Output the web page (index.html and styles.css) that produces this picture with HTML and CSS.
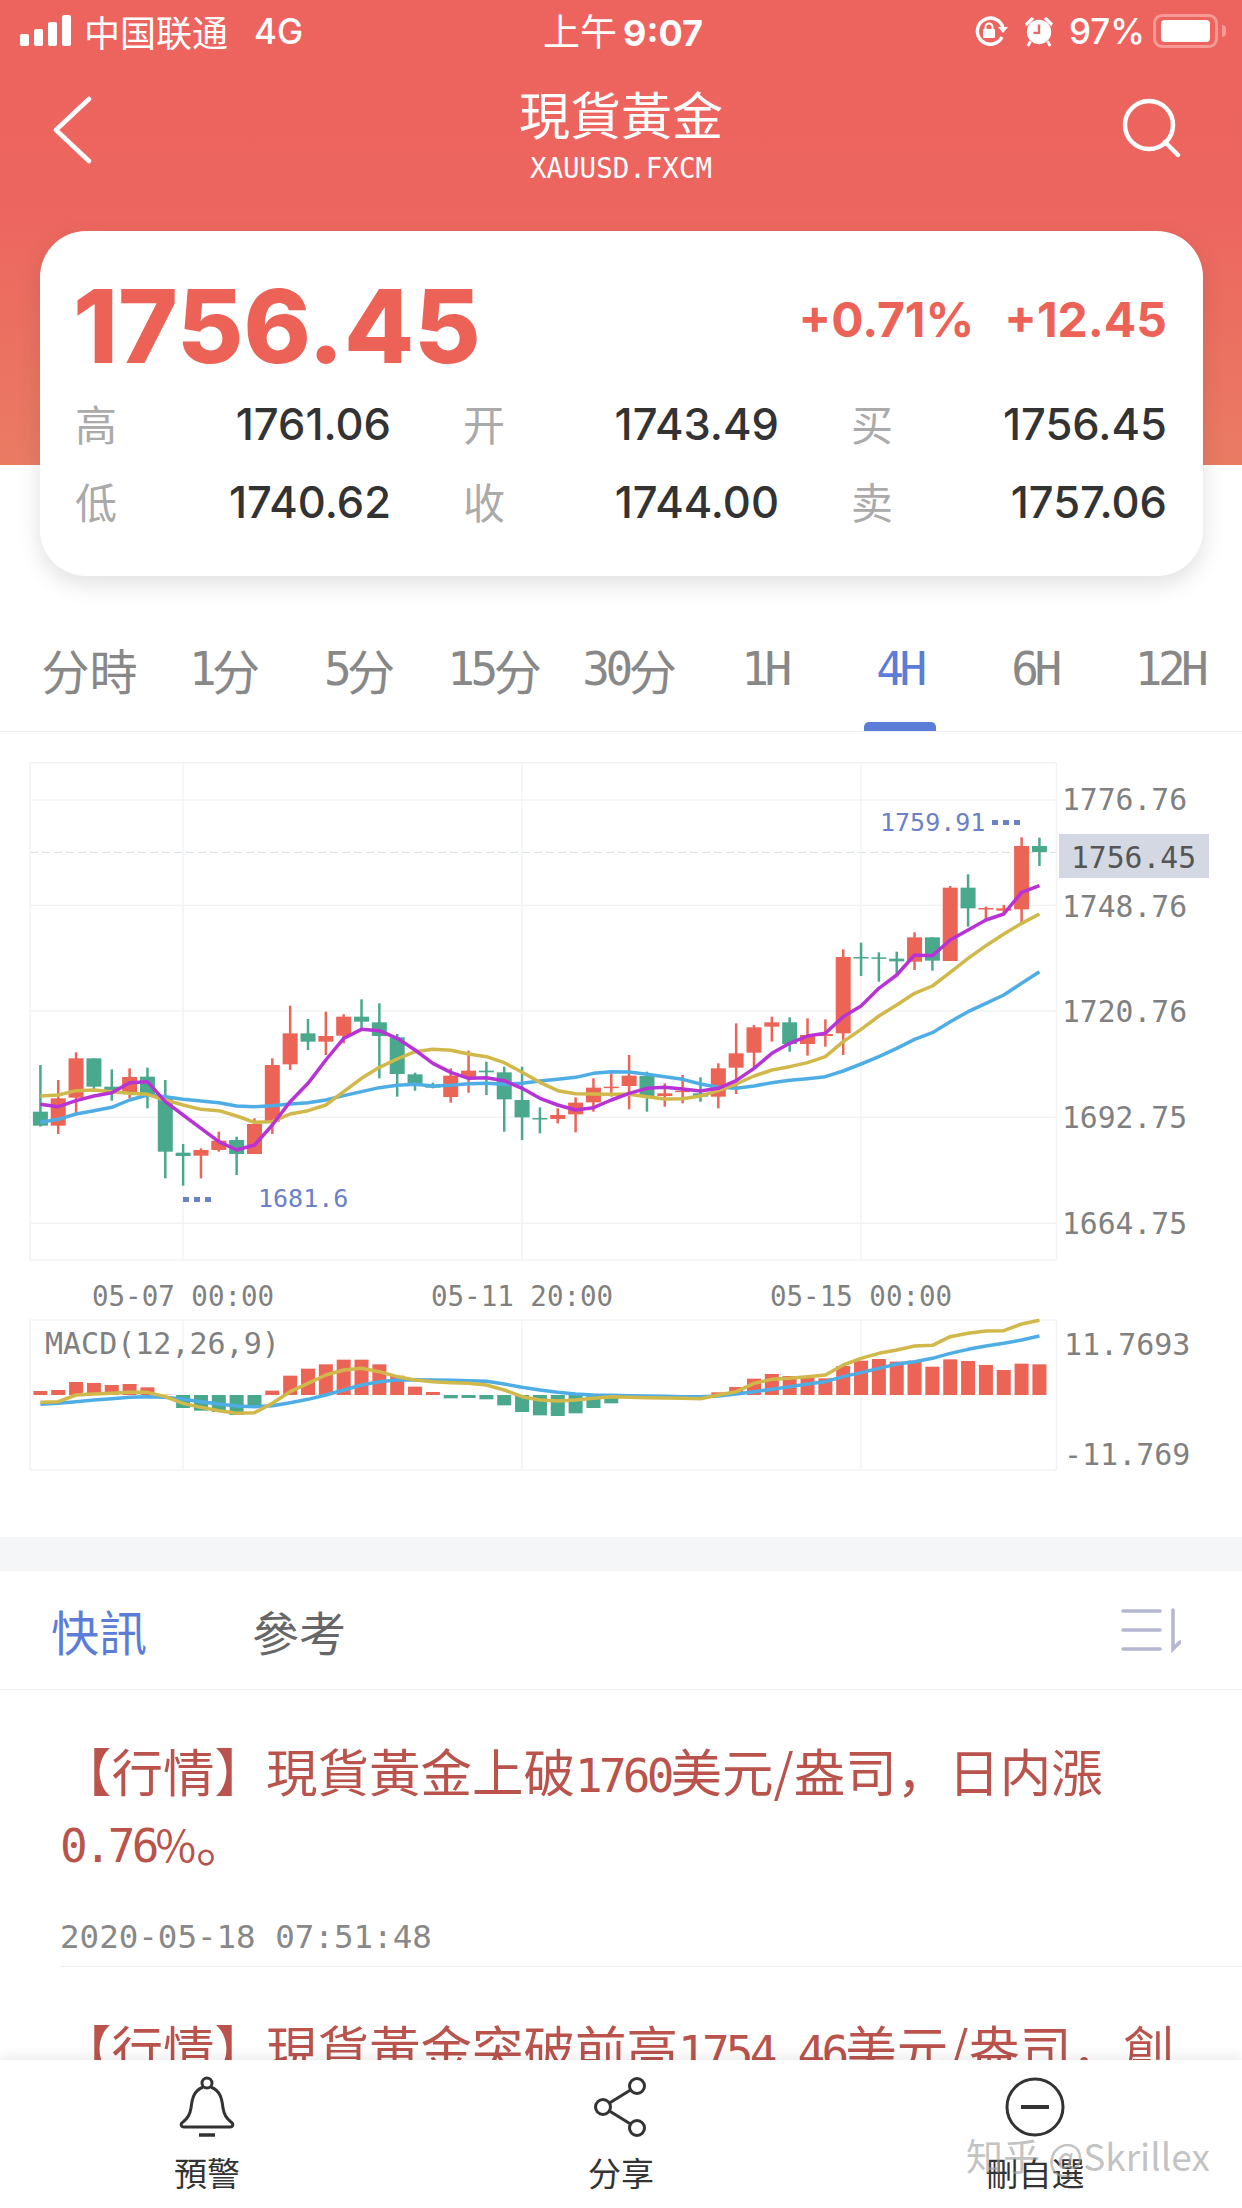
FILE: index.html
```html
<!DOCTYPE html>
<html lang="zh-Hans">
  <head>
    <meta charset="UTF-8" />
    <title>現貨黃金</title>
    <link rel="stylesheet" href="styles.css">
  </head>
  <body>
    <div class="page">
      <header class="header">
        <div class="status">
          <div class="status-left">
            <svg class="signal" width="54" height="32" viewBox="0 0 54 32">
              <rect x="0" y="19" width="9" height="12" rx="2" />
              <rect x="14" y="14" width="9" height="17" rx="2" />
              <rect x="28" y="7" width="9" height="24" rx="2" />
              <rect x="42" y="0" width="9" height="31" rx="2" />
            </svg>
            <span class="carrier">中国联通</span>
            <span class="network">4G</span>
          </div>
          <div class="status-time">上午<b>9:07</b></div>
          <div class="status-right">
            <svg class="rotation" width="34" height="30" viewBox="0 0 34 30" fill="none" stroke="#fff" stroke-width="3.4">
              <path d="M28 21a13 13 0 1 1 1-9" />
              <path d="M24 11h10l-5 6z" fill="#fff" stroke="none" />
              <rect x="9" y="13" width="12" height="9" rx="1" fill="#fff" stroke="none" />
              <path d="M11.5 13v-2a3.500 3.500 0 0 1 7 0v2" stroke-width="2" />
            </svg>
            <svg class="alarm" width="30" height="32" viewBox="0 0 32 34">
              <circle cx="16" cy="18" r="13" fill="#fff" />
              <path d="M1 9l7-7 3 2-8 8zM31 9l-7-7-3 2 8 8z" fill="#fff" />
              <path d="M16 10v9h-6" fill="none" stroke="#ec6560" stroke-width="2.5" />
              <path d="M7 28l-3 5M25 28l3 5" stroke="#fff" stroke-width="3" />
            </svg>
            <span class="battery-text">97%</span>
            <div class="battery"><div class="battery-fill"></div></div>
            <div class="battery-tip"></div>
          </div>
        </div>
        <div class="nav">
          <svg class="nav-back" width="44" height="70" viewBox="0 0 44 70" fill="none" stroke="#fff" stroke-width="4.5" stroke-linecap="round" stroke-linejoin="round">
            <path d="M36 4L3 35l33 31" />
          </svg>
          <div class="nav-title">
            <div class="title">現貨黃金</div>
            <div class="symbol">XAUUSD.FXCM</div>
          </div>
          <svg class="nav-search" width="60" height="60" viewBox="0 0 60 60" fill="none" stroke="#fff" stroke-width="4.5" stroke-linecap="round">
            <circle cx="27" cy="27" r="24" />
            <path d="M43 44l13 13" />
          </svg>
        </div>
      </header>

      <section class="quote">
        <div class="quote-top">
          <div class="price">1756.45</div>
          <div class="change">
            <span>+0.71%</span>
            <span>+12.45</span>
          </div>
        </div>
        <div class="stats">
          <div class="stat"><span class="stat-label">高</span><span class="stat-value">1761.06</span></div>
          <div class="stat"><span class="stat-label">开</span><span class="stat-value">1743.49</span></div>
          <div class="stat"><span class="stat-label">买</span><span class="stat-value">1756.45</span></div>
          <div class="stat"><span class="stat-label">低</span><span class="stat-value">1740.62</span></div>
          <div class="stat"><span class="stat-label">收</span><span class="stat-value">1744.00</span></div>
          <div class="stat"><span class="stat-label">卖</span><span class="stat-value">1757.06</span></div>
        </div>
      </section>

      <nav class="periods">
        <div class="period">分時</div>
        <div class="period"><span class="mono">1</span>分</div>
        <div class="period"><span class="mono">5</span>分</div>
        <div class="period"><span class="mono">15</span>分</div>
        <div class="period"><span class="mono">30</span>分</div>
        <div class="period"><span class="mono">1H</span></div>
        <div class="period period_active"><span class="mono">4H</span></div>
        <div class="period"><span class="mono">6H</span></div>
        <div class="period"><span class="mono">12H</span></div>
      </nav>

      <section class="chart">
        <svg id="chart-svg" class="chart-svg" width="1242" height="805" viewBox="0 0 1242 805"></svg>
      </section>

      <div class="band"></div>

      <div class="news-tabs">
        <div class="news-tab news-tab_active">快訊</div>
        <div class="news-tab">參考</div>
        <svg class="sort" width="60" height="46" viewBox="0 0 60 46" fill="none" stroke="#b5b7d0" stroke-width="3.5" stroke-linecap="round">
          <path d="M2 4h37M2 23h37M2 42h37" />
          <path d="M52 3v39l7-7" />
        </svg>
      </div>

      <article class="news-item">
        <p class="news-text">【行情】現貨黃金上破<span class="mono">1760</span>美元/盎司，日内漲<span class="mono">0.76</span><span class="percent">%</span>。</p>
        <div class="news-time">2020-05-18 07:51:48</div>
      </article>
      <article class="news-item">
        <p class="news-text">【行情】現貨黃金突破前高<span class="mono">1754.46</span>美元/盎司，創</p>
      </article>

      <footer class="toolbar">
        <div class="tool">
          <svg width="56" height="62" viewBox="0 0 56 62" fill="none" stroke="#333" stroke-width="3">
            <circle cx="28" cy="7" r="5" />
            <path d="M24 11C14 15 13 24 12 32c-1 7-4 11-8 14-3 2-2 5 1 5h46c3 0 4-3 1-5-4-3-7-7-8-14-1-8-2-17-12-21" />
            <path d="M20 59h16" stroke-width="3.5" />
          </svg>
          <span class="tool-label">預警</span>
        </div>
        <div class="tool">
          <svg width="56" height="62" viewBox="0 0 56 62" fill="none" stroke="#333" stroke-width="3">
            <circle cx="44" cy="10" r="7.5" />
            <circle cx="10" cy="31" r="7.5" />
            <circle cx="44" cy="52" r="7.5" />
            <path d="M37.5 14L16.5 27M16.5 35l21 13" />
          </svg>
          <span class="tool-label">分享</span>
        </div>
        <div class="tool">
          <svg width="60" height="62" viewBox="0 0 60 62" fill="none" stroke="#333" stroke-width="3">
            <circle cx="30" cy="31" r="28" />
            <path d="M16 31h28" stroke-width="4" />
          </svg>
          <span class="tool-label">刪自選</span>
        </div>
        <div class="watermark">知乎 @Skrillex</div>
      </footer>
    </div>
    <script src="chart.js"></script>
  </body>
</html>
```

FILE: styles.css
```css
* {
  box-sizing: border-box;
}

html,
body {
  margin: 0;
  padding: 0;
  background: #fff;
}

.page {
  position: relative;
  width: 1242px;
  height: 2208px;
  overflow: hidden;
  font-family: "Noto Sans CJK SC", "Noto Sans", sans-serif;
  color: #333;
}

.header {
  height: 465px;
  background: linear-gradient(#ed645f 0, #ed655f 200px, #ea7b63 465px);
  color: #fff;
}

.status {
  display: grid;
  grid-template-columns: 1fr auto 1fr;
  align-items: center;
  height: 60px;
  padding: 2px 16px 0 20px;
}

.status-left {
  display: flex;
  align-items: center;
  gap: 10px;
}

.signal {
  fill: #fff;
}

.carrier {
  font-size: 36px;
  line-height: 40px;
}

.network {
  margin-left: 16px;
  font-family: "Inter", sans-serif;
  font-size: 35px;
  font-weight: 500;
}

.status-time {
  font-size: 37px;
  line-height: 40px;
}

.status-time b {
  margin-left: 6px;
  font-family: "Inter", sans-serif;
  font-size: 36px;
  font-weight: 700;
}

.status-right {
  display: flex;
  align-items: center;
  justify-content: flex-end;
}

.rotation {
  margin-right: 16px;
}

.alarm {
  margin-right: 15px;
}

.battery-text {
  margin-right: 8px;
  font-family: "Inter", sans-serif;
  font-size: 35px;
  font-weight: 500;
}

.battery {
  width: 65px;
  height: 34px;
  padding: 3px 5px;
  border: 3px solid #f79a96;
  border-radius: 9px;
}

.battery-fill {
  height: 100%;
  background: #fff;
  border-radius: 4px;
}

.battery-tip {
  width: 4px;
  height: 12px;
  margin-left: 4px;
  background: #f79a96;
  border-radius: 0 4px 4px 0;
}

.nav {
  display: grid;
  grid-template-columns: 1fr auto 1fr;
  align-items: center;
  height: 146px;
  padding: 0 60px;
}

.nav-back {
  margin: 0 0 6px -7px;
}

.nav-search {
  justify-self: end;
  margin-bottom: 10px;
}

.nav-title {
  text-align: center;
}

.title {
  font-size: 51px;
  line-height: 62px;
}

.symbol {
  margin-top: 8px;
  font-family: "DejaVu Sans Mono", monospace;
  font-size: 27.5px;
  line-height: 32px;
}

.quote {
  position: relative;
  width: 1163px;
  height: 345px;
  margin: -234px 0 0 40px;
  padding: 30px 36px 0;
  background: #fff;
  border-radius: 46px;
  box-shadow: 0 8px 22px rgba(60, 60, 60, 0.16);
}

.quote-top {
  display: flex;
  align-items: center;
  justify-content: space-between;
  height: 124px;
}

.price {
  margin: 6px 0 0 -3px;
  font-family: "Inter", sans-serif;
  font-size: 102px;
  font-weight: 800;
  color: #ec6257;
}

.change {
  display: flex;
  gap: 30px;
  margin-bottom: 8px;
  font-family: "Inter", sans-serif;
  font-size: 48px;
  font-weight: 700;
  color: #ec6257;
}

.stats {
  display: grid;
  grid-template-columns: repeat(3, 315px);
  justify-content: space-between;
}

.stat {
  display: flex;
  align-items: center;
  justify-content: space-between;
  height: 78px;
}

.stat-label {
  margin: 0 0 4px -1px;
  font-size: 42px;
  color: #aaa;
}

.stat-value {
  font-family: "Inter", sans-serif;
  font-size: 43.5px;
  font-weight: 500;
  color: #333;
}

.periods {
  display: grid;
  grid-template-columns: repeat(9, 135px);
  height: 156px;
  padding-left: 22px;
  border-bottom: 1px solid #eee;
}

.period {
  display: flex;
  align-items: center;
  justify-content: center;
  position: relative;
  padding-top: 30px;
  font-size: 48px;
  color: #888;
}

.period .mono {
  letter-spacing: -4.5px;
}

.mono {
  font-family: "DejaVu Sans Mono", monospace;
  font-size: 46px;
  line-height: 1;
  letter-spacing: -3.8px;
}

.percent {
  font-size: 44px;
  line-height: 1;
}

.period_active {
  color: #5b7dd8;
}

.period_active::after {
  content: "";
  position: absolute;
  left: 32px;
  right: 31px;
  bottom: 0;
  height: 9px;
  background: #5b7dd8;
  border-radius: 5px 5px 0 0;
}

.chart {
  height: 805px;
}

.chart-svg {
  display: block;
}

.chart-label {
  font-family: "DejaVu Sans Mono", monospace;
}

.band {
  height: 34px;
  background: #f5f6f8;
}

.news-tabs {
  display: flex;
  align-items: center;
  height: 119px;
  padding: 0 61px 0 51px;
  border-bottom: 1px solid #eee;
}

.news-tab {
  width: 201px;
  font-size: 47px;
  color: #666;
}

.news-tab_active {
  font-size: 48px;
  color: #5b7dd8;
}

.sort {
  margin-left: auto;
}

.news-item {
  height: 277px;
  margin-left: 60px;
  padding: 45px 40px 0 0;
  border-bottom: 1px solid #eee;
}

.news-text {
  margin: 0;
  font-size: 51.5px;
  line-height: 70px;
  color: #b9534c;
}

.news-time {
  margin-top: 40px;
  font-family: "DejaVu Sans Mono", monospace;
  font-size: 32.5px;
  line-height: 44px;
  color: #888;
}

.toolbar {
  position: absolute;
  left: 0;
  right: 0;
  bottom: 0;
  display: grid;
  grid-template-columns: 414px 414px 414px;
  height: 148px;
  background: #fff;
  box-shadow: 0 -4px 12px rgba(0, 0, 0, 0.08);
}

.tool {
  display: flex;
  flex-direction: column;
  align-items: center;
  padding-top: 16px;
  gap: 12px;
}

.tool-label {
  font-size: 33px;
  line-height: 44px;
  color: #333;
}

.watermark {
  position: absolute;
  left: 966px;
  top: 68px;
  font-size: 37px;
  color: rgba(160, 160, 160, 0.65);
}
```

FILE: chart.js
```js
const svg = document.getElementById("chart-svg");
const NS = "http://www.w3.org/2000/svg";

// svg starts at y=732 on the page, all numbers below are page coords
const TOP = 732;
const RED = "#ec6456";
const GREEN = "#4aa88d";

const barX = (i) => 40.4 + i * 17.84;
const fromZoom = (v) => 740 + v / 3 - TOP;
const fromMacd = (v) => 1260 + v / 3 - TOP;

function add(name, attrs, text) {
  const el = document.createElementNS(NS, name);
  Object.keys(attrs).forEach((key) => el.setAttribute(key, attrs[key]));
  if (text) el.textContent = text;
  svg.appendChild(el);
  return el;
}

function line(x1, y1, x2, y2, color, width, dash) {
  const attrs = { x1, y1, x2, y2, stroke: color, "stroke-width": width };
  if (dash) attrs["stroke-dasharray"] = dash;
  add("line", attrs);
}

function label(x, y, text, size, color, anchor) {
  add("text", { x, y, fill: color, "font-size": size, class: "chart-label", "text-anchor": anchor || "start" }, text);
}

function poly(values, color, width, toY) {
  const points = values.map((v, i) => barX(i) + "," + toY(v)).join(" ");
  add("polyline", { points, fill: "none", stroke: color, "stroke-width": width, "stroke-linejoin": "round" });
}

// grid
const gridColor = "#f2f3f4";
const kTop = fromZoom(68);
const kBottom = 1260 - TOP;
const mTop = 1320 - TOP;
const mBottom = 1470 - TOP;

[68, 180, 496, 813, 1132, 1450].forEach((v) => line(30, fromZoom(v), 1056.5, fromZoom(v), gridColor, 1.5));
line(30, kBottom, 1056.5, kBottom, gridColor, 1.5);
line(30, fromZoom(337), 1056.5, fromZoom(337), "#d3dde0", 1, "8 4");
[30, 183, 522, 861, 1056.5].forEach((x) => line(x, kTop, x, kBottom, gridColor, 1.5));

line(30, mTop, 1056.5, mTop, gridColor, 1.5);
line(30, mBottom, 1056.5, mBottom, gridColor, 1.5);
[30, 183, 522, 861, 1056.5].forEach((x) => line(x, mTop, x, mBottom, gridColor, 1.5));

// [up, wickTop, bodyTop, bodyBottom, wickBottom]
const candles = [
  [0, 975, 1115, 1157, 1160], [1, 1020, 1075, 1157, 1182], [1, 937, 955, 1073, 1120],
  [0, 955, 955, 1040, 1050], [0, 988, 1040, 1055, 1082], [1, 985, 1011, 1060, 1075],
  [0, 983, 1010, 1065, 1105], [0, 1020, 1075, 1235, 1315], [0, 1212, 1238, 1248, 1337],
  [1, 1225, 1230, 1247, 1315], [1, 1175, 1202, 1230, 1235], [0, 1190, 1200, 1242, 1305],
  [1, 1135, 1152, 1242, 1242], [1, 955, 975, 1145, 1182], [1, 797, 880, 973, 990],
  [0, 837, 880, 905, 930], [1, 815, 888, 905, 945], [1, 823, 830, 887, 910],
  [0, 778, 830, 845, 870], [0, 790, 847, 888, 1015], [0, 882, 892, 1002, 1070],
  [0, 998, 1003, 1032, 1052], [0, 1028, 1036, 1043, 1045], [1, 985, 1007, 1071, 1088],
  [1, 932, 992, 1012, 1058], [0, 965, 992, 997, 1065], [0, 980, 997, 1078, 1175],
  [0, 980, 1080, 1132, 1200], [0, 1102, 1134, 1137, 1180], [1, 1105, 1125, 1137, 1150],
  [1, 1072, 1088, 1123, 1177], [1, 1015, 1043, 1087, 1115], [1, 1000, 1040, 1043, 1070],
  [1, 945, 1007, 1038, 1108], [0, 995, 1008, 1068, 1115], [1, 1030, 1060, 1068, 1100],
  [1, 1005, 1052, 1056, 1090], [0, 1012, 1060, 1070, 1085], [1, 970, 985, 1070, 1105],
  [1, 850, 940, 983, 1062], [1, 855, 862, 938, 985], [1, 830, 847, 860, 905],
  [0, 832, 847, 912, 935], [1, 835, 885, 912, 947], [1, 838, 882, 888, 920],
  [1, 628, 651, 880, 945], [0, 608, 651, 655, 708], [0, 637, 652, 654, 725],
  [0, 635, 656, 664, 710], [1, 577, 592, 665, 690], [0, 592, 592, 662, 692],
  [1, 438, 443, 663, 663], [0, 403, 443, 505, 560], [1, 500, 504, 507, 540],
  [1, 495, 505, 512, 520], [1, 292, 318, 508, 550], [0, 293, 318, 336, 378],
];

candles.forEach((c, i) => {
  const color = c[0] ? RED : GREEN;
  const x = barX(i);
  line(x, fromZoom(c[1]), x, fromZoom(c[4]), color, 2.5);
  add("rect", {
    x: x - 7.5,
    y: fromZoom(c[2]),
    width: 15,
    height: Math.max(1.5, (c[3] - c[2]) / 3),
    fill: color,
  });
});

const ma5 = [1093, 1100, 1082, 1068, 1058, 1028, 1025, 1085, 1125, 1165, 1205, 1230, 1215, 1155, 1085, 1030, 960, 895, 868, 872, 895, 930, 970, 997, 1015, 1013, 1022, 1045, 1075, 1095, 1110, 1103, 1080, 1060, 1045, 1042, 1047, 1053, 1045, 1022, 985, 940, 910, 888, 880, 830, 798, 745, 705, 645, 647, 600, 570, 540, 522, 457, 437];
const ma10 = [1068, 1065, 1052, 1050, 1055, 1060, 1063, 1080, 1095, 1108, 1112, 1128, 1147, 1145, 1122, 1112, 1095, 1055, 1015, 982, 957, 935, 928, 931, 942, 950, 968, 997, 1027, 1052, 1061, 1062, 1063, 1063, 1070, 1077, 1076, 1068, 1052, 1032, 1008, 990, 980, 968, 950, 905, 868, 828, 795, 760, 738, 697, 655, 617, 582, 550, 522];
const ma20 = [1147, 1138, 1122, 1112, 1102, 1080, 1065, 1070, 1078, 1083, 1088, 1098, 1100, 1097, 1092, 1088, 1080, 1067, 1055, 1043, 1036, 1033, 1038, 1036, 1031, 1030, 1033, 1030, 1023, 1018, 1012, 1000, 995, 996, 1003, 1010, 1018, 1032, 1042, 1045, 1038, 1028, 1021, 1016, 1010, 993, 972, 950, 925, 898, 878, 845, 815, 790, 765, 730, 695];

poly(ma20, "#4fade6", 3.5, fromZoom);
poly(ma10, "#d1b84a", 3.5, fromZoom);
poly(ma5, "#b833d6", 3.5, fromZoom);

// high / low marks
const blue = "#6a80c9";
label(258, 1207 - TOP, "1681.6", 25, blue);
label(880, 831 - TOP, "1759.91", 25, blue);
[183, 194, 205].forEach((x) => add("rect", { x, y: 1197 - TOP, width: 6, height: 5, fill: blue }));
[992, 1003, 1014].forEach((x) => add("rect", { x, y: 820 - TOP, width: 6, height: 5, fill: blue }));

// price axis
const axisColor = "#808080";
[["1776.76", 810], ["1748.76", 917], ["1720.76", 1022], ["1692.75", 1128], ["1664.75", 1234]].forEach((row) =>
  label(1062, row[1] - TOP, row[0], 29.7, axisColor)
);
add("rect", { x: 1059, y: 834 - TOP, width: 150, height: 44, fill: "#d3d8e2" });
label(1071, 868 - TOP, "1756.45", 29.7, "#555");

// time axis
[["05-07 00:00", 92], ["05-11 20:00", 431], ["05-15 00:00", 770]].forEach((row) =>
  label(row[1], 1306 - TOP, row[0], 27.5, axisColor)
);

// macd: bar tops in zoom coords, baseline at 405
const macd = [393, 390, 366, 369, 375, 372, 382, 404, 444, 452, 456, 465, 440, 392, 347, 326, 313, 299, 299, 313, 347, 380, 396, 415, 414, 418, 436, 456, 466, 468, 460, 444, 430, 407, 406, 406, 406, 406, 397, 381, 356, 342, 348, 352, 355, 318, 302, 297, 305, 302, 320, 298, 303, 315, 330, 311, 313];

macd.forEach((v, i) => {
  const base = fromMacd(405);
  const h = Math.abs(v - 405) / 3;
  add("rect", {
    x: barX(i) - 7,
    y: v < 405 ? base - h : base,
    width: 14,
    height: h,
    fill: v < 405 ? RED : GREEN,
  });
});

const dea = [433, 430, 425, 420, 416, 412, 410, 412, 418, 425, 432, 438, 440, 437, 428, 418, 405, 390, 375, 365, 360, 359, 360, 361, 362, 364, 372, 382, 390, 397, 402, 405, 406, 407, 408, 409, 410, 410, 408, 402, 395, 388, 380, 372, 365, 350, 338, 325, 312, 305, 295, 280, 268, 258, 250, 240, 228];
const dif = [427, 425, 405, 402, 400, 397, 397, 410, 430, 442, 452, 460, 458, 430, 395, 370, 345, 330, 325, 335, 350, 360, 365, 368, 370, 375, 390, 410, 420, 423, 420, 415, 410, 412, 413, 414, 415, 416, 405, 395, 370, 358, 355, 350, 345, 315, 295, 280, 270, 258, 256, 230, 220, 213, 212, 192, 181];

poly(dea, "#4fade6", 3.5, fromMacd);
poly(dif, "#d1b84a", 3.5, fromMacd);

label(45, 1354 - TOP, "MACD(12,26,9)", 30, axisColor);
label(1064, 1355 - TOP, "11.7693", 30, axisColor);
label(1064, 1465 - TOP, "-11.769", 30, axisColor);
```
